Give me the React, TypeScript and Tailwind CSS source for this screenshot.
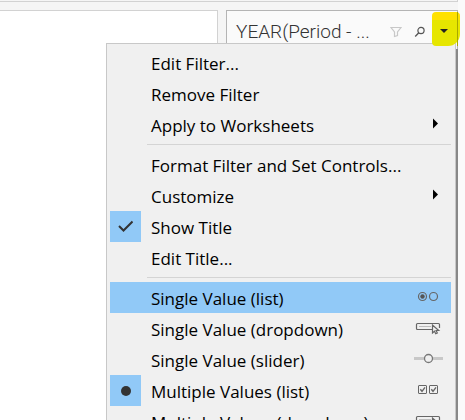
import type { ReactNode } from 'react';

type Item = {
  label: string;
  mark?: 'check' | 'dot';
  icon?: ReactNode;
  active?: boolean;
};

const Arrow = () => (
  <svg width="30" height="16" viewBox="0 0 30 16" aria-hidden="true">
    <path d="M19 2.500v10l5-5z" fill="#000" />
  </svg>
);

const RadioIcon = () => (
  <svg width="30" height="16" viewBox="0 0 30 16" fill="none" stroke="#666" strokeWidth="1.200" aria-hidden="true">
    <circle cx="8.5" cy="7.5" r="4" />
    <circle cx="8.5" cy="7.5" r="2.200" fill="#555" stroke="none" />
    <circle cx="19.5" cy="7.5" r="4" />
  </svg>
);

const DropdownIcon = () => (
  <svg width="30" height="16" viewBox="0 0 30 16" fill="none" stroke="#666" aria-hidden="true">
    <path d="M18 9.5H3.5a1 1 0 0 1-1-1v-4a1 1 0 0 1 1-1h21a1 1 0 0 1 1 1V8" strokeWidth="1.200" />
    <path d="M5 6.5h12" stroke="#bbb" />
    <path d="M18.5 5v8l2-1.700 1.200 2.400 1.600-.8-1.200-2.400h2.600z" fill="#f0f0f0" strokeWidth="1.200" />
  </svg>
);

const SliderIcon = () => (
  <svg width="30" height="16" viewBox="0 0 30 16" fill="none" aria-hidden="true">
    <path d="M0 7.500h29" stroke="#c8c8c8" strokeWidth="3" />
    <circle cx="14.500" cy="7.500" r="4" fill="#f0f0f0" stroke="#777" strokeWidth="1.300" />
  </svg>
);

const ChecksIcon = () => (
  <svg width="30" height="16" viewBox="0 0 30 16" fill="none" stroke="#666" aria-hidden="true">
    <rect x="4.500" y="3.500" width="8" height="8" rx=".5" />
    <rect x="15.500" y="3.500" width="8" height="8" rx=".5" />
    <path d="m6.300 7.300 1.700 2 3-4M17.300 7.300l1.700 2 3-4" strokeWidth="1.400" />
  </svg>
);

const groups: Item[][] = [
  [
    { label: 'Edit Filter...' },
    { label: 'Remove Filter' },
    { label: 'Apply to Worksheets', icon: <Arrow /> },
  ],
  [
    { label: 'Format Filter and Set Controls...' },
    { label: 'Customize', icon: <Arrow /> },
    { label: 'Show Title', mark: 'check' },
    { label: 'Edit Title...' },
  ],
  [
    { label: 'Single Value (list)', icon: <RadioIcon />, active: true },
    { label: 'Single Value (dropdown)', icon: <DropdownIcon /> },
    { label: 'Single Value (slider)', icon: <SliderIcon /> },
    { label: 'Multiple Values (list)', icon: <ChecksIcon />, mark: 'dot' },
    { label: 'Multiple Values (dropdown)', icon: <DropdownIcon /> },
  ],
];

function Mark({ kind }: { kind?: 'check' | 'dot' }) {
  return (
    <span className={`flex size-[31px] shrink-0 items-center justify-center ${kind ? 'bg-[#91c9f7]' : ''}`}>
      {kind === 'check' && (
        <svg width="15" height="14" viewBox="0 0 15 14" fill="none" stroke="#333" strokeWidth="2" aria-hidden="true">
          <path d="m1 6 4.500 4.500L14.500 1.500" />
        </svg>
      )}
      {kind === 'dot' && <span className="size-2.5 rounded-full bg-[#333]" />}
    </span>
  );
}

function MenuRow({ item }: { item: Item }) {
  return (
    <button
      type="button"
      role="menuitem"
      className={`flex h-[31px] w-full items-center text-left ${item.active ? 'bg-[#91c9f7]' : ''}`}
    >
      <Mark kind={item.mark} />
      <span className="ml-2.5 flex-1 pt-0.5 whitespace-nowrap">{item.label}</span>
      {item.icon && <span className="mr-[7px] -mt-0.5 shrink-0">{item.icon}</span>}
    </button>
  );
}

export default function App() {
  return (
    <div className="relative flex h-screen overflow-hidden bg-[#fafafa]">
      <div className="flex min-w-0 flex-1 flex-col bg-[#f5f5f5]">
        <div className="h-0.5 shrink-0 border-r border-b border-[#d2d2d2]" />
        <div className="mt-2 flex min-h-0 flex-1 gap-2">
          <div className="w-[218px] shrink-0 border-t border-r border-[#d2d2d2] bg-white" />
          <section className="min-w-0 flex-1 border border-[#b4b4b4] bg-[#fafafa]">
            <header className="flex h-[42px] items-center pl-[9px]">
              <h1 className="flex-1 whitespace-nowrap font-['Roboto',sans-serif] text-[19px] font-light text-[#333]">
                YEAR(Period - ...
              </h1>
              <button type="button" aria-label="Filter" className="mr-3 shrink-0">
                <svg width="12" height="12" viewBox="0 0 12 12" fill="none" stroke="#c8c8c8" strokeWidth="1.200">
                  <path d="M1 1.500h10L7.500 6v3.500l-3 1V6z" />
                </svg>
              </button>
              <button type="button" aria-label="Search" className="mr-1.5 shrink-0">
                <svg width="12" height="12" viewBox="0 0 12 12" fill="none" stroke="#555" strokeWidth="1.200">
                  <circle cx="7" cy="4.500" r="3.100" />
                  <path d="m4.800 6.800-3.600 3.600" strokeWidth="1.400" />
                </svg>
              </button>
              <span className="w-[25px] shrink-0" />
            </header>
          </section>
        </div>
      </div>
      <div className="w-[7px] shrink-0 bg-[#fafafa]" />

      <div
        role="menu"
        className="absolute top-[43px] right-[9px] left-[106px] border border-[#c8c8c8] bg-[#f0f0f0] py-[3px] pr-1 pl-[3px] font-['Open_Sans','Noto_Sans',sans-serif] text-[17px] leading-6 text-black"
      >
        {groups.map((items, index) => (
          <div key={items[0].label} role="group">
            {index > 0 && <div className="my-1 ml-[37px] h-px bg-[#d4d4d4]" />}
            {items.map((item) => (
              <MenuRow key={item.label} item={item} />
            ))}
          </div>
        ))}
      </div>
      <div className="absolute top-[49px] right-[7px] bottom-0 w-0.5 bg-[#888]" />

      <button
        type="button"
        aria-label="Filter menu"
        className="absolute top-3 right-[5px] flex h-[34px] w-7 items-center justify-between rounded-sm rounded-br-xl bg-linear-to-b from-[#ffe100] from-25% to-[#e6e600] to-25% pr-0.5 pl-2"
      >
        <svg width="9" height="6" viewBox="0 0 9 6" className="mt-1" aria-hidden="true">
          <path d="M0 1h8L4 5z" fill="#222" />
        </svg>
        <span className="h-full w-px bg-[#a8a800]" />
      </button>
    </div>
  );
}
